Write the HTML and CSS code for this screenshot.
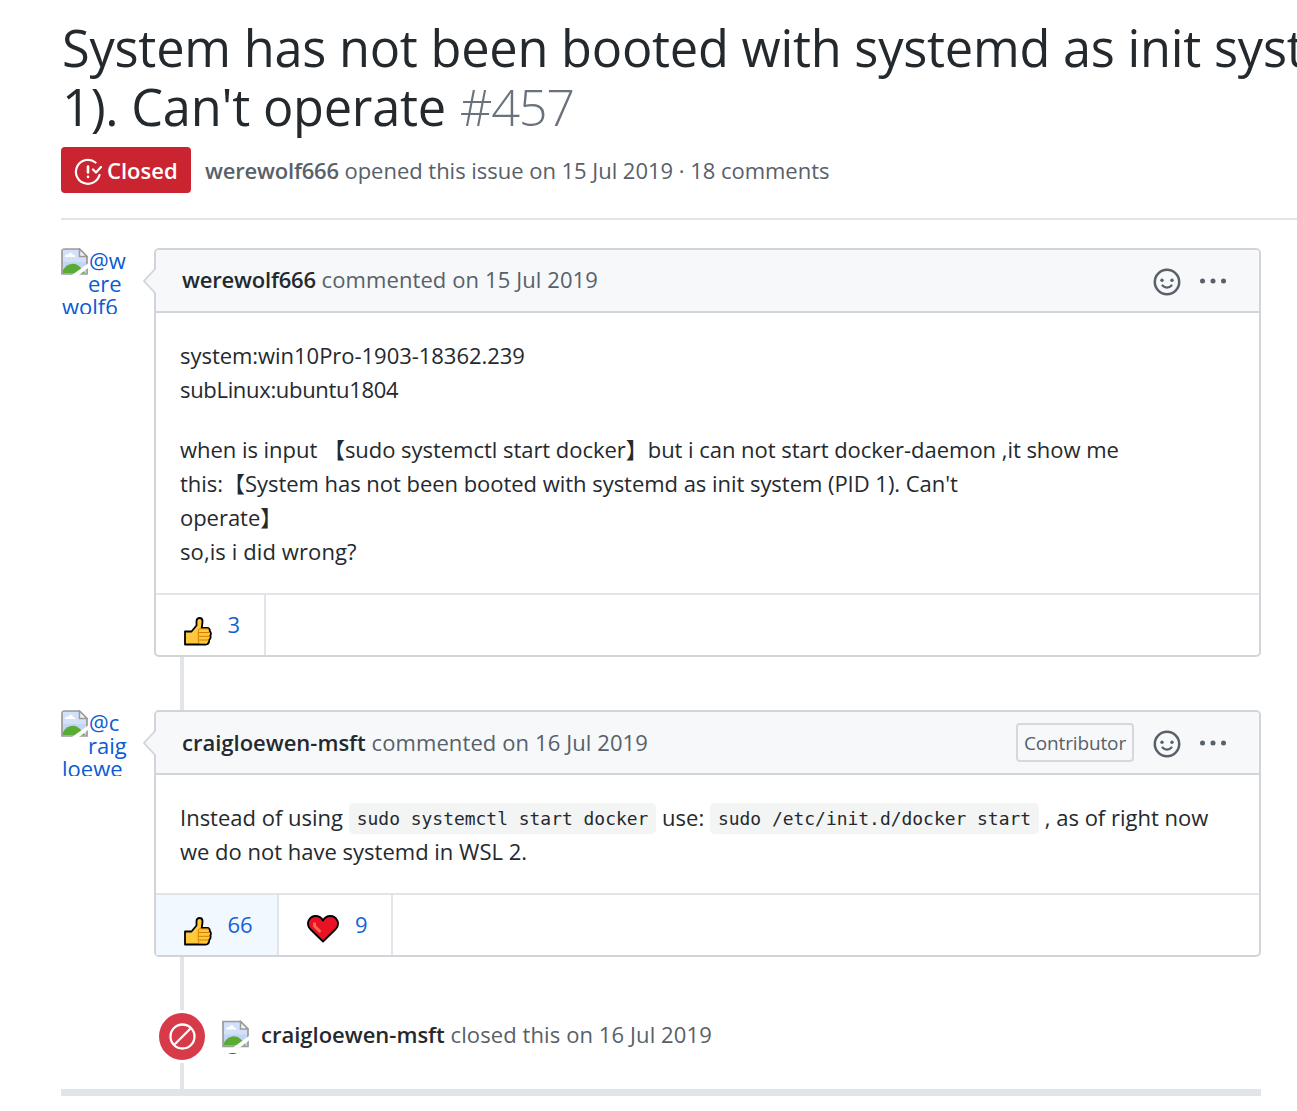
FILE: index.html
```
<!DOCTYPE html>
<html lang="en">
<head>
<meta charset="utf-8">
<title>System has not been booted with systemd · Issue #457</title>
<link rel="stylesheet" href="styles.css">
</head>
<body>
<svg class="defs" aria-hidden="true">
  <symbol id="broken" viewBox="0 0 27 27">
    <path d="M1 1h18l7 7v18H1z" fill="#c3d4f5"/>
    <path d="M2 2h16v7h7v5H2z" fill="#d3e0fa"/>
    <path d="M4 9c0-2 2-3 3-2 1-3 5-3 5 0 2 0 3 1 2 2z" fill="#fff"/>
    <path d="M2 25v-3c5-8 13-8 18-2l4 5z" fill="#58ac34"/>
    <path d="M1 1h17.500L26 8.500V26H1z" fill="none" stroke="#9b9b9b" stroke-width="1.700"/>
    <path d="M18.500 1v7.500H26z" fill="#f4f4f4" stroke="#9b9b9b" stroke-width="1.500"/>
    <path d="M11 27L27 15.500v4.500L18 27z" fill="#fff"/>
  </symbol>
  <symbol id="smile" viewBox="0 0 28 28">
    <circle cx="14" cy="14" r="12.200" fill="none" stroke="#586069" stroke-width="2.500"/>
    <circle cx="9" cy="12.300" r="1.700" fill="#586069"/>
    <circle cx="19" cy="12.300" r="1.700" fill="#586069"/>
    <path d="M9.500 17.500c2.300 2.700 6.700 2.700 9 0" fill="none" stroke="#586069" stroke-width="2.200" stroke-linecap="round"/>
  </symbol>
  <symbol id="dots" viewBox="0 0 28 6">
    <circle cx="3.500" cy="3" r="2.500"/><circle cx="14" cy="3" r="2.500"/><circle cx="24.500" cy="3" r="2.500"/>
  </symbol>
  <symbol id="thumb" viewBox="0 0 28 29">
    <path d="M1 14.500h6.500l5-6V4c0-4 6-4 6 0 0 3-.500 5-.800 7H23c2.500 0 3 1.500 2.800 3.200 1.300 1 1.500 3.300.500 4.300.700 2 0 3.500-1 4.300 0 3-1.300 4.700-3.800 4.700H1z" fill="#ffc83d" stroke="#000" stroke-width="1.800" stroke-linejoin="round"/>
    <path d="M24.500 11.800h-8c-2 0-2.200 1-2.200 2.200v10c0 1.500.700 2.500 2.200 2.500H23M15 15.500h10.500M15 19.300h10.500M15 23h9.500" fill="none" stroke="#d67d00" stroke-width="1"/>
  </symbol>
  <symbol id="heart" viewBox="0 0 32 28">
    <path d="M16 26.500L3.200 14C-2 8 3 1 8.500 1 12 1 14.500 2.700 16 5.500 17.500 2.700 20 1 23.500 1 29 1 34 8 28.800 14z" fill="#e81224" stroke="#000" stroke-width="1.800" stroke-linejoin="round"/>
    <path d="M7.500 7.500v3.500l6 6" fill="none" stroke="#f4694f" stroke-width="3"/>
  </symbol>
</svg>

<main class="page">
  <h1 class="title">System has not been booted with systemd as init system as PID<br>1). Can't operate <span class="number">#457</span></h1>
  <div class="meta">
    <span class="state">
      <svg class="state-icon" viewBox="0 0 28 28" fill="none" stroke="#fff" stroke-width="2.200" stroke-linecap="round" stroke-linejoin="round">
        <path d="M21.500 4.500A12 12 0 1 0 25.500 17"/>
        <path d="M14 8.500v6M14 18.800v.200" stroke-width="2.600"/>
        <path d="M19 11.500l3 3 5-5.500"/>
      </svg>
      <b>Closed</b>
    </span>
    <span class="opened"><b>werewolf666</b> opened this issue on 15 Jul 2019 · 18 comments</span>
  </div>

  <section class="thread">
    <article class="row">
      <div class="avatar"><svg><use href="#broken"/></svg><span>@w</span><span class="mid">ere</span><span class="low">wolf6</span></div>
      <div class="comment">
        <svg class="caret" viewBox="0 0 13 26"><path d="M13 0L1 13l12 13" fill="#f6f8fa" stroke="#d1d5da" stroke-width="1.700"/></svg>
        <header class="head">
          <span class="by first"><b>werewolf666</b> <span class="when">commented on 15 Jul 2019</span></span>
          <svg class="smile"><use href="#smile"/></svg>
          <svg class="dots"><use href="#dots"/></svg>
        </header>
        <div class="body">
          <p>system:win10Pro-1903-18362.239<br><span class="snug">subLinux:ubuntu1804</span></p>
          <p>when is input 【sudo systemctl start docker】but i can not start docker-daemon ,it show me<br>this:【System has not been booted with systemd as init system (PID 1). Can't<br>operate】<br><span class="asked">so,is i did wrong?</span></p>
        </div>
        <footer class="reactions">
          <span class="reaction three"><svg class="thumb"><use href="#thumb"/></svg>3</span>
        </footer>
      </div>
    </article>
    <div class="line gap-a"></div>
    <article class="row">
      <div class="avatar"><svg><use href="#broken"/></svg><span>@c</span><span class="mid">raig</span><span class="low">loewe</span></div>
      <div class="comment">
        <svg class="caret" viewBox="0 0 13 26"><path d="M13 0L1 13l12 13" fill="#f6f8fa" stroke="#d1d5da" stroke-width="1.700"/></svg>
        <header class="head">
          <span class="by"><b>craigloewen-msft</b> <span class="when">commented on 16 Jul 2019</span></span>
          <span class="badge">Contributor</span>
          <svg class="smile"><use href="#smile"/></svg>
          <svg class="dots"><use href="#dots"/></svg>
        </header>
        <div class="body plain">
          <p>Instead of using <code>sudo systemctl start docker</code> use: <code>sudo /etc/init.d/docker start</code> , as of right now<br>we do not have systemd in WSL 2.</p>
        </div>
        <footer class="reactions">
          <span class="reaction mine"><svg class="thumb"><use href="#thumb"/></svg>66</span>
          <span class="reaction love"><svg class="heart"><use href="#heart"/></svg>9</span>
        </footer>
      </div>
    </article>
    <div class="line gap-b"></div>
    <div class="event">
      <span class="event-icon"><svg viewBox="0 0 27 27" fill="none" stroke="#fff" stroke-width="2.300"><circle cx="13.500" cy="13.500" r="12"/><path d="M5.500 21.500l16-16"/></svg></span>
      <span class="mini"><svg><use href="#broken"/></svg><span>@</span></span>
      <span class="by"><b>craigloewen-msft</b> <span class="when">closed this on 16 Jul 2019</span></span>
    </div>
    <div class="line gap-c"></div>
    <div class="bar"></div>
  </section>
</main>
</body>
</html>
```
FILE: styles.css
```
* { box-sizing: border-box; }
body {
  margin: 0;
  height: 1111px;
  overflow: hidden;
  background: #fff;
  color: #24292e;
  font: 22px/34px "Open Sans", "Noto Sans CJK SC", sans-serif;
}
svg { display: block; flex: none; }
b { font-weight: 600; }
.defs { width: 0; height: 0; position: absolute; }
.page { padding: 18px 0 0 61px; overflow: hidden; }

.title {
  margin: 0;
  padding-left: 1px;
  font-size: 50.5px;
  line-height: 59px;
  font-weight: 400;
  letter-spacing: -0.23px;
  white-space: nowrap;
}
.number { margin-left: 1px; color: #6a737d; font-weight: 300; letter-spacing: -1.3px; }

.meta {
  display: flex;
  align-items: center;
  gap: 14px;
  margin-top: 11px;
  padding-bottom: 25px;
  border-bottom: 2px solid #e1e4e8;
  color: #586069;
}
.opened { letter-spacing: -0.03px; }
.opened b, .first b { letter-spacing: -0.2px; }
.state {
  display: flex;
  align-items: center;
  gap: 5px;
  width: 130px;
  height: 46px;
  padding-left: 13px;
  border-radius: 4px;
  background: #cb2431;
  color: #fff;
}
.state-icon { width: 28px; height: 28px; margin-top: 4px; }

.thread { width: 1200px; padding-top: 28px; }
.row { display: flex; gap: 27px; }
.avatar {
  display: flex;
  flex-wrap: wrap;
  align-content: flex-start;
  width: 66px;
  height: 66px;
  overflow: hidden;
  border-radius: 4px;
  color: #0b5bd3;
  line-height: 23px;
}
.avatar svg { width: 27px; height: 27px; margin-right: 1px; }
.avatar span { height: 23px; margin-top: 1px; }
.avatar .mid { width: 39px; margin: -3px 0 0 27px; }
.avatar .low { margin: 0 0 0 1px; }

.comment {
  position: relative;
  width: 1107px;
  border: 2px solid #d1d5da;
  border-radius: 5px;
}
.caret { position: absolute; left: -13px; top: 18px; width: 13px; height: 26px; }
.head {
  display: flex;
  align-items: center;
  height: 63px;
  padding: 0 32px 0 26px;
  border-bottom: 2px solid #d1d5da;
  border-radius: 3px 3px 0 0;
  background: #f6f8fa;
}
.by { flex: 1; padding-bottom: 2px; color: #24292e; }
.first { padding-bottom: 4px; }
.when { color: #586069; letter-spacing: 0.1px; }
.asked { letter-spacing: 0.1px; }
.badge {
  height: 39px;
  margin-right: 19px;
  padding: 0 6px;
  border: 2px solid #d6d8db;
  border-radius: 4px;
  color: #586069;
  font-size: 19px;
  line-height: 36px;
  letter-spacing: -0.15px;
}
.smile { width: 28px; height: 28px; margin: 3px 18px 0 0; }
.dots { width: 28px; height: 6px; fill: #586069; }

.body { padding: 25px 24px 25px; white-space: nowrap; letter-spacing: -0.035px; }
.plain { letter-spacing: 0; }
.body p { margin: 0; }
.body p + p { margin-top: 26px; }
.snug { letter-spacing: -0.32px; }
code {
  position: relative;
  top: -1px;
  padding: 5px 8px;
  border-radius: 5px;
  background: #f3f4f4;
  font: 17.95px/20px "DejaVu Sans Mono", monospace;
}

.reactions { display: flex; height: 62px; border-top: 2px solid #e1e4e8; }
.reaction {
  display: flex;
  gap: 16px;
  padding: 12px 0 0 27px;
  border-right: 2px solid #e1e4e8;
  color: #1560d4;
}
.three { width: 110px; }
.mine { width: 123px; background: #f1f8ff; }
.love { width: 114px; padding-left: 28px; }
.thumb { width: 28px; height: 29px; margin: 10px 0 0 0.5px; }
.heart { width: 32px; height: 28px; margin-top: 8px; }

.line { width: 4px; margin-left: 119px; background: #e1e4e8; }
.gap-a { height: 53px; }
.gap-b { height: 53px; }
.event { display: flex; align-items: center; height: 53px; padding-left: 98px; }
.event .by { padding-bottom: 5px; }
.event-icon {
  display: grid;
  place-items: center;
  width: 46px;
  height: 47px;
  border-radius: 50%;
  background: #d73a49;
}
.event-icon svg { width: 27px; height: 27px; }
.mini {
  width: 27px;
  height: 34px;
  margin: 0 12px 0 17px;
  overflow: hidden;
  color: #0b5bd3;
  line-height: 24px;
}
.mini svg { width: 27px; height: 28px; }
.mini span { display: block; }
.gap-c { height: 26px; }
.bar { height: 7px; background: #e1e4e8; }
```
